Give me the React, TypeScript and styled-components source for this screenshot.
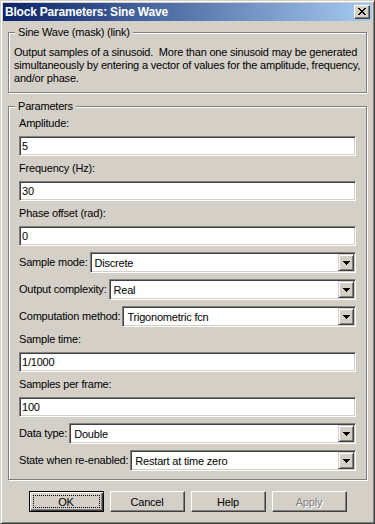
import styled, { createGlobalStyle } from "styled-components";

const GlobalStyle = createGlobalStyle`
  html, body {
    margin: 0;
    padding: 0;
    background: #d4d0c8;
  }
`;

const Window = styled.div`
  box-sizing: border-box;
  width: 375px;
  height: 524px;
  padding: 2px;
  display: flex;
  flex-direction: column;
  background: #d4d0c8;
  border: 1px solid;
  border-color: #d4d0c8 #404040 #404040 #d4d0c8;
  box-shadow: inset 1px 1px 0 #fff, inset -1px -1px 0 #808080;
  font-family: "Liberation Sans", Arial, sans-serif;
  font-size: 11px;
  letter-spacing: -0.2px;
  color: #000;
`;

const TitleBar = styled.div`
  height: 18px;
  display: flex;
  align-items: center;
  padding: 0 2px;
  background: linear-gradient(to right, #0a246a, #a6caf0);
`;

const Title = styled.span`
  color: #fff;
  font-weight: bold;
  font-size: 12px;
  letter-spacing: -0.2px;
  white-space: nowrap;
`;

const CloseButton = styled.div`
  box-sizing: border-box;
  margin-left: auto;
  width: 16px;
  height: 14px;
  display: flex;
  align-items: center;
  justify-content: center;
  padding: 0 1px 1px 0;
  background: #d4d0c8;
  border: 1px solid;
  border-color: #fff #404040 #404040 #fff;
  box-shadow: inset -1px -1px 0 #808080;
`;

const Body = styled.div`
  display: flex;
  flex-direction: column;
  padding: 0 5px;
`;

const GroupBox = styled.div<{ $gap: number }>`
  position: relative;
  margin-top: ${(p) => p.$gap}px;
  border: 1px solid #808080;
  box-shadow: inset 1px 1px 0 #fff, 1px 1px 0 #fff;
`;

const Caption = styled.span`
  position: absolute;
  top: -7px;
  left: 6px;
  padding: 0 3px;
  line-height: 13px;
  background: #d4d0c8;
`;

const Description = styled.p`
  margin: 0;
  padding: 13px 5px 7px 5px;
  line-height: 13px;
  white-space: pre;
`;

const Params = styled.div`
  display: flex;
  flex-direction: column;
  gap: 6px;
  padding: 10px 10px 8px 10px;
`;

const Field = styled.div`
  display: flex;
  flex-direction: column;
  gap: 6px;
`;

const Label = styled.label`
  line-height: 13px;
  white-space: nowrap;
`;

const TextBox = styled.input`
  box-sizing: border-box;
  width: 100%;
  height: 20px;
  margin: 0;
  padding: 0 0 0 2px;
  background: #fff;
  border: 1px solid;
  border-color: #808080 #fff #fff #808080;
  box-shadow: inset 1px 1px 0 #404040, inset -1px -1px 0 #d4d0c8;
  font: inherit;
  letter-spacing: inherit;
  color: #000;
  outline: none;
`;

const ComboRow = styled.div`
  display: flex;
  align-items: center;
  gap: 2px;
`;

const Combo = styled.div`
  box-sizing: border-box;
  flex: 1;
  height: 21px;
  padding: 1px;
  display: flex;
  align-items: center;
  background: #fff;
  border: 1px solid;
  border-color: #808080 #fff #fff #808080;
  box-shadow: inset 1px 1px 0 #404040, inset -1px -1px 0 #d4d0c8;
`;

const ComboText = styled.span`
  flex: 1;
  padding-left: 3px;
  white-space: nowrap;
`;

const ArrowButton = styled.div`
  box-sizing: border-box;
  width: 16px;
  height: 17px;
  display: flex;
  align-items: center;
  justify-content: center;
  background: #d4d0c8;
  border: 1px solid;
  border-color: #d4d0c8 #404040 #404040 #d4d0c8;
  box-shadow: inset 1px 1px 0 #fff, inset -1px -1px 0 #808080;
`;

const ButtonRow = styled.div`
  display: flex;
  justify-content: center;
  gap: 6px;
  margin-top: 11px;
`;

const Button = styled.button<{ $default?: boolean }>`
  position: relative;
  box-sizing: border-box;
  width: 75px;
  height: 21px;
  margin: 0;
  padding: 0;
  background: #d4d0c8;
  font: inherit;
  letter-spacing: inherit;
  color: #000;
  border: 1px solid;
  border-color: ${(p) => (p.$default ? "#000" : "#fff #404040 #404040 #fff")};
  box-shadow: ${(p) =>
    p.$default
      ? "inset 1px 1px 0 #fff, inset -1px -1px 0 #404040, inset -2px -2px 0 #808080"
      : "inset -1px -1px 0 #808080"};

  &:disabled {
    color: #808080;
    text-shadow: 1px 1px 0 #fff;
  }

  ${(p) =>
    p.$default &&
    `
    &::after {
      content: "";
      position: absolute;
      inset: 3px;
      border: 1px dotted #000;
    }
  `}
`;

const CloseGlyph = () => (
  <svg width="8" height="7" viewBox="0 0 8 7">
    <path
      fill="#000"
      d="M0 0h2v1H0zM6 0h2v1H6zM1 1h2v1H1zM5 1h2v1H5zM2 2h4v1H2zM3 3h2v1H3zM2 4h4v1H2zM1 5h2v1H1zM5 5h2v1H5zM0 6h2v1H0zM6 6h2v1H6z"
    />
  </svg>
);

const DownArrow = () => (
  <svg width="7" height="4" viewBox="0 0 7 4">
    <path fill="#000" d="M0 0h7v1H0zM1 1h5v1H1zM2 2h3v1H2zM3 3h1v1H3z" />
  </svg>
);

const TextField = ({ label, value }: { label: string; value: string }) => (
  <Field>
    <Label>{label}</Label>
    <TextBox value={value} readOnly />
  </Field>
);

const Select = ({ label, value }: { label: string; value: string }) => (
  <ComboRow>
    <Label>{label}</Label>
    <Combo>
      <ComboText>{value}</ComboText>
      <ArrowButton>
        <DownArrow />
      </ArrowButton>
    </Combo>
  </ComboRow>
);

const App = () => {
  return (
    <>
      <GlobalStyle />
      <Window>
        <TitleBar>
          <Title>Block Parameters: Sine Wave</Title>
          <CloseButton>
            <CloseGlyph />
          </CloseButton>
        </TitleBar>
        <Body>
          <GroupBox $gap={11}>
            <Caption>Sine Wave (mask) (link)</Caption>
            <Description>
              {"Output samples of a sinusoid.  More than one sinusoid may be generated"}
              <br />
              {"simultaneously by entering a vector of values for the amplitude, frequency,"}
              <br />
              {"and/or phase."}
            </Description>
          </GroupBox>
          <GroupBox $gap={13}>
            <Caption>Parameters</Caption>
            <Params>
              <TextField label="Amplitude:" value="5" />
              <TextField label="Frequency (Hz):" value="30" />
              <TextField label="Phase offset (rad):" value="0" />
              <Select label="Sample mode:" value="Discrete" />
              <Select label="Output complexity:" value="Real" />
              <Select label="Computation method:" value="Trigonometric fcn" />
              <TextField label="Sample time:" value="1/1000" />
              <TextField label="Samples per frame:" value="100" />
              <Select label="Data type:" value="Double" />
              <Select label="State when re-enabled:" value="Restart at time zero" />
            </Params>
          </GroupBox>
          <ButtonRow>
            <Button $default>OK</Button>
            <Button>Cancel</Button>
            <Button>Help</Button>
            <Button disabled>Apply</Button>
          </ButtonRow>
        </Body>
      </Window>
    </>
  );
};

export default App;
